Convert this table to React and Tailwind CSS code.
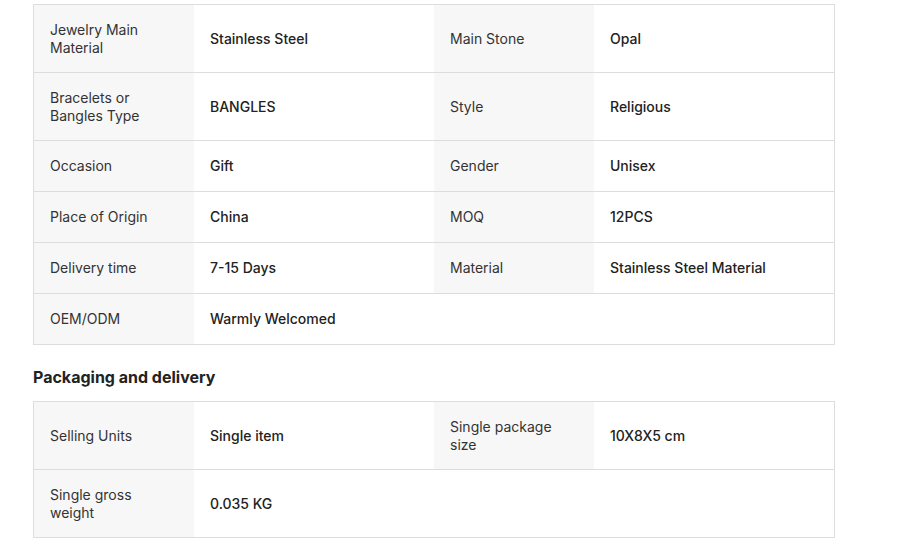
const specs = [
  [['Jewelry Main Material', 'Stainless Steel'], ['Main Stone', 'Opal']],
  [['Bracelets or Bangles Type', 'BANGLES'], ['Style', 'Religious']],
  [['Occasion', 'Gift'], ['Gender', 'Unisex']],
  [['Place of Origin', 'China'], ['MOQ', '12PCS']],
  [['Delivery time', '7-15 Days'], ['Material', 'Stainless Steel Material']],
  [['OEM/ODM', 'Warmly Welcomed']],
];

const packaging = [
  [['Selling Units', 'Single item'], ['Single package size', '10X8X5 cm']],
  [['Single gross weight', '0.035 KG']],
];

function SpecTable({ rows }) {
  return (
    <div className="w-[802px] border border-[#dddddd]">
      {rows.map((row, i) => (
        <div
          key={i}
          className={`grid grid-cols-[160px_240px_160px_240px] ${i > 0 ? 'border-t border-[#dddddd]' : ''}`}
        >
          {[0, 1].map((j) => {
            const pair = row[j];
            return [
              <div key={`l${j}`} className={`min-h-[50px] px-4 py-[15.5px] flex items-center ${pair ? 'bg-[#f7f7f7] text-[#333333]' : ''}`}>
                {pair ? pair[0] : ''}
              </div>,
              <div key={`v${j}`} className="min-h-[50px] px-4 py-[15.5px] flex items-center font-medium text-[#222222]">
                {pair ? pair[1] : ''}
              </div>,
            ];
          })}
        </div>
      ))}
    </div>
  );
}

export default function App() {
  return (
    <div
      className="min-h-screen bg-white pt-1 pl-[33px] text-[14px] leading-[18px]"
      style={{ fontFamily: 'Inter, "Liberation Sans", sans-serif' }}
    >
      <SpecTable rows={specs} />
      <h3 className="mt-5 mb-3 text-[16px] leading-6 font-bold text-[#222222]">Packaging and delivery</h3>
      <SpecTable rows={packaging} />
    </div>
  );
}
